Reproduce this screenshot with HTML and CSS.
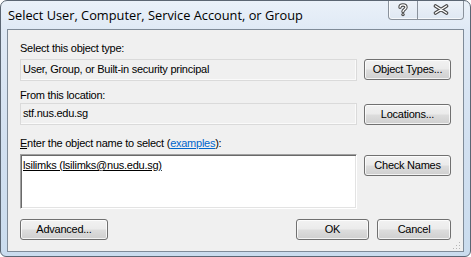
FILE: index.html
```html
<!DOCTYPE html>
<html>
<head>
<meta charset="utf-8">
<link rel="stylesheet" href="styles.css">
</head>
<body>
<div class="window">
  <div class="titlebar">
    <span class="title">Select User, Computer, Service Account, or Group</span>
    <div class="caption-buttons">
      <div class="cap-btn help">
        <svg width="10" height="14" viewBox="0 0 10 14">
          <path d="M2 4.2 C2 1.2 8 1.2 8 4.2 C8 6.4 5 6.4 5 8.6" fill="none" stroke="#4a4a4a" stroke-width="3.4" stroke-linecap="round"/>
          <circle cx="5" cy="11.6" r="1.7" fill="#4a4a4a"/>
          <path d="M2 4.2 C2 1.2 8 1.2 8 4.2 C8 6.4 5 6.4 5 8.6" fill="none" stroke="#ffffff" stroke-width="1.3" stroke-linecap="round"/>
          <circle cx="5" cy="11.6" r="0.6" fill="#ffffff"/>
        </svg>
      </div>
      <div class="cap-btn close">
        <svg width="16" height="11" viewBox="0 0 16 11">
          <path d="M2.5 2 L13.5 9 M13.5 2 L2.5 9" stroke="#4a4a4a" stroke-width="3.6" stroke-linecap="round"/>
          <path d="M2.5 2 L13.5 9 M13.5 2 L2.5 9" stroke="#ffffff" stroke-width="1.4" stroke-linecap="round"/>
        </svg>
      </div>
    </div>
  </div>
  <div class="client">
    <div class="sec sec1">
      <div class="label">Select this object type:</div>
      <div class="field">User, Group, or Built-in security principal</div>
      <button class="btn">Object Types...</button>
    </div>
    <div class="sec sec2">
      <div class="label">From this location:</div>
      <div class="field">stf.nus.edu.sg</div>
      <button class="btn btn-low">Locations...</button>
    </div>
    <div class="sec sec3">
      <div class="label"><u>E</u>nter the object name to select (<a class="link" href="#">examples</a>):</div>
      <div class="names"><u>lsilimks (lsilimks@nus.edu.sg)</u></div>
      <button class="btn btn-low">Check Names</button>
    </div>
    <div class="footer">
      <button class="btn adv">Advanced...</button>
      <div class="spacer"></div>
      <button class="btn ok">OK</button>
      <button class="btn cancel">Cancel</button>
    </div>
    <svg class="grip" width="8" height="8" viewBox="0 0 8 8">
      <rect x="6" y="0" width="1" height="1" fill="#b5b5b5"/>
      <rect x="3" y="3" width="1" height="1" fill="#b5b5b5"/>
      <rect x="6" y="3" width="1" height="1" fill="#b5b5b5"/>
      <rect x="0" y="6" width="1" height="1" fill="#b5b5b5"/>
      <rect x="3" y="6" width="1" height="1" fill="#b5b5b5"/>
      <rect x="6" y="6" width="1" height="1" fill="#b5b5b5"/>
    </svg>
  </div>
</div>
</body>
</html>
```
FILE: styles.css
```css
html, body {
  margin: 0;
  padding: 0;
  background: #ffffff;
}

.window {
  width: 471px;
  height: 257px;
  box-sizing: border-box;
  border: 1px solid #5b6673;
  border-radius: 7px 7px 6px 6px;
  background: linear-gradient(180deg, #eaf1f9 0px, #dfe9f5 30px, #d2e0f0 140px, #cadcee 257px);
  display: flex;
  flex-direction: column;
  overflow: hidden;
}

.titlebar {
  height: 28px;
  display: flex;
  align-items: flex-start;
  padding: 0 6px 0 7px;
}

.title {
  font-family: "Open Sans", "Noto Sans", sans-serif;
  font-size: 12.8px;
  line-height: 16px;
  color: #000;
  margin-top: 6px;
  flex: 1;
  white-space: nowrap;
}

.caption-buttons {
  display: flex;
  margin-top: -1px;
  height: 19px;
  border: 1px solid #8a929c;
  border-top: none;
  border-radius: 0 0 4px 4px;
  background: linear-gradient(180deg, #eef3f9, #dfe8f3);
  box-shadow: inset 0 -1px 0 rgba(255,255,255,0.7), inset 1px 0 0 rgba(255,255,255,0.7);
}

.cap-btn {
  display: flex;
  align-items: center;
  justify-content: center;
}

.cap-btn.help {
  width: 28px;
  border-right: 1px solid #8a929c;
}

.cap-btn.close {
  width: 45px;
}

.cap-btn svg {
  display: block;
}

.client {
  position: relative;
  flex: 1;
  margin: 0 6px 4px 6px;
  border: 1px solid #7f8b98;
  background: #f0f0f0;
  padding: 12px 12px 0 12px;
  display: flex;
  flex-direction: column;
  font-family: "Liberation Sans", Arial, sans-serif;
  font-size: 11px;
  letter-spacing: -0.25px;
  color: #000;
}

.sec {
  display: grid;
  grid-template-columns: 337px 87px;
  column-gap: 7px;
  align-items: start;
}

.label {
  grid-column: 1 / -1;
  line-height: 13px;
  white-space: nowrap;
}

.sec1 .label { margin-bottom: 4px; }
.sec2 { margin-top: 8px; }
.sec2 .label { margin-bottom: 1px; }
.sec3 { margin-top: 12px; }
.sec3 .label { margin-bottom: 4px; }

.field {
  box-sizing: border-box;
  height: 22px;
  border: 1px solid #dadada;
  background: #f0f0f0;
  padding: 3px 2px 0 2px;
  line-height: 13px;
  white-space: nowrap;
  box-shadow: inset -1px -1px 0 #fafafa;
}

.names {
  box-sizing: border-box;
  height: 55px;
  background: #ffffff;
  border: 1px solid;
  border-color: #a0a0a0 #ffffff #ffffff #a0a0a0;
  box-shadow: inset 1px 1px 0 #696969, inset -1px -1px 0 #e3e3e3;
  padding: 4px 2px 0 2px;
  line-height: 13px;
  white-space: nowrap;
}

.link {
  color: #0066cc;
  text-decoration: underline;
}

.btn {
  box-sizing: border-box;
  height: 21px;
  margin: 0;
  padding: 0;
  border: 1px solid #707070;
  border-radius: 3px;
  background: linear-gradient(180deg, #f2f2f2 0%, #ebebeb 48%, #dddddd 52%, #cfcfcf 100%);
  box-shadow: inset 0 0 0 1px rgba(255,255,255,0.75);
  font-family: "Liberation Sans", Arial, sans-serif;
  font-size: 11px;
  letter-spacing: -0.25px;
  color: #000;
  line-height: 17px;
  text-align: center;
  white-space: nowrap;
}

.btn-low { margin-top: 1px; }

.footer {
  display: flex;
  margin-top: 10px;
}

.spacer { flex: 1; }

.adv { width: 88px; }
.ok { width: 73px; margin-right: 8px; }
.cancel { width: 74px; }

.grip {
  position: absolute;
  right: 2px;
  bottom: 1px;
}
```
